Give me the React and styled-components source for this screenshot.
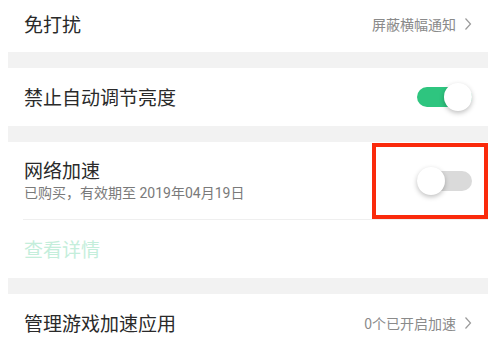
import styled, { createGlobalStyle } from 'styled-components'

const GlobalStyle = createGlobalStyle`
  body {
    margin: 0;
    background: #fff;
    font-family: 'Noto Sans CJK SC', 'Noto Sans', sans-serif;
  }
`

const Page = styled.div`
  width: 488px;
  height: 353px;
  overflow: hidden;
  background: #fff;
`

const Gap = styled.div`
  height: 16px;
  margin-left: 8px;
  background: #f2f2f2;
`

const Row = styled.div`
  display: flex;
  align-items: center;
  height: ${(props) => props.height || 58}px;
  padding: 0 16px 0 24px;
  padding-bottom: ${(props) => props.lift || 0}px;
  box-sizing: border-box;
  border-bottom: ${(props) => (props.divider ? '1px solid #efefef' : 'none')};
  margin-left: ${(props) => (props.divider ? '23px' : '0')};
  padding-left: ${(props) => (props.divider ? '1px' : '24px')};
`

const Texts = styled.div`
  display: flex;
  flex-direction: column;
  flex: 1;
`

const Title = styled.div`
  font-size: 19px;
  line-height: 24px;
  color: ${(props) => (props.muted ? '#c4eedb' : '#2a2a2a')};
`

const Sub = styled.div`
  font-size: 14px;
  line-height: 20px;
  margin-top: 1px;
  color: #7a7a7a;
  font-family: 'Roboto', 'Noto Sans CJK SC', sans-serif;
`

const Value = styled.div`
  display: flex;
  align-items: center;
  gap: 8px;
  font-size: 14px;
  color: #8a8a8a;
`

const Track = styled.div`
  position: relative;
  width: 55px;
  height: 20px;
  border-radius: 10px;
  background: ${(props) => (props.on ? '#2ec57f' : '#dadada')};
`

const Knob = styled.div`
  position: absolute;
  top: -4px;
  left: ${(props) => (props.on ? '27px' : '0')};
  width: 28px;
  height: 28px;
  border-radius: 50%;
  background: #fff;
  box-shadow: 0 2px 5px rgba(0, 0, 0, 0.25);
`

const Highlight = styled.div`
  display: flex;
  align-items: center;
  justify-content: flex-end;
  width: 116px;
  height: 76px;
  margin-right: -16px;
  box-sizing: border-box;
  border: 4px solid #fa2a0b;
  padding-right: 12px;
`

const Chevron = () => (
  <svg width="8" height="14" viewBox="0 0 8 14">
    <path d="M1.5 1.5 L6.5 7 L1.5 12.5" fill="none" stroke="#9a9a9a" strokeWidth="1.2" />
  </svg>
)

const Switch = ({ on }) => (
  <Track on={on ? 1 : 0}>
    <Knob on={on ? 1 : 0} />
  </Track>
)

export default function App() {
  return (
    <Page>
      <GlobalStyle />
      <Row height={52} lift={4}>
        <Texts>
          <Title>免打扰</Title>
        </Texts>
        <Value>
          屏蔽横幅通知 <Chevron />
        </Value>
      </Row>
      <Gap />
      <Row>
        <Texts>
          <Title>禁止自动调节亮度</Title>
        </Texts>
        <Switch on />
      </Row>
      <Gap />
      <Row height={78} divider>
        <Texts>
          <Title>网络加速</Title>
          <Sub>已购买，有效期至 2019年04月19日</Sub>
        </Texts>
        <Highlight>
          <Switch />
        </Highlight>
      </Row>
      <Row>
        <Texts>
          <Title muted>查看详情</Title>
        </Texts>
      </Row>
      <Gap />
      <Row>
        <Texts>
          <Title>管理游戏加速应用</Title>
        </Texts>
        <Value>
          0个已开启加速 <Chevron />
        </Value>
      </Row>
    </Page>
  )
}
